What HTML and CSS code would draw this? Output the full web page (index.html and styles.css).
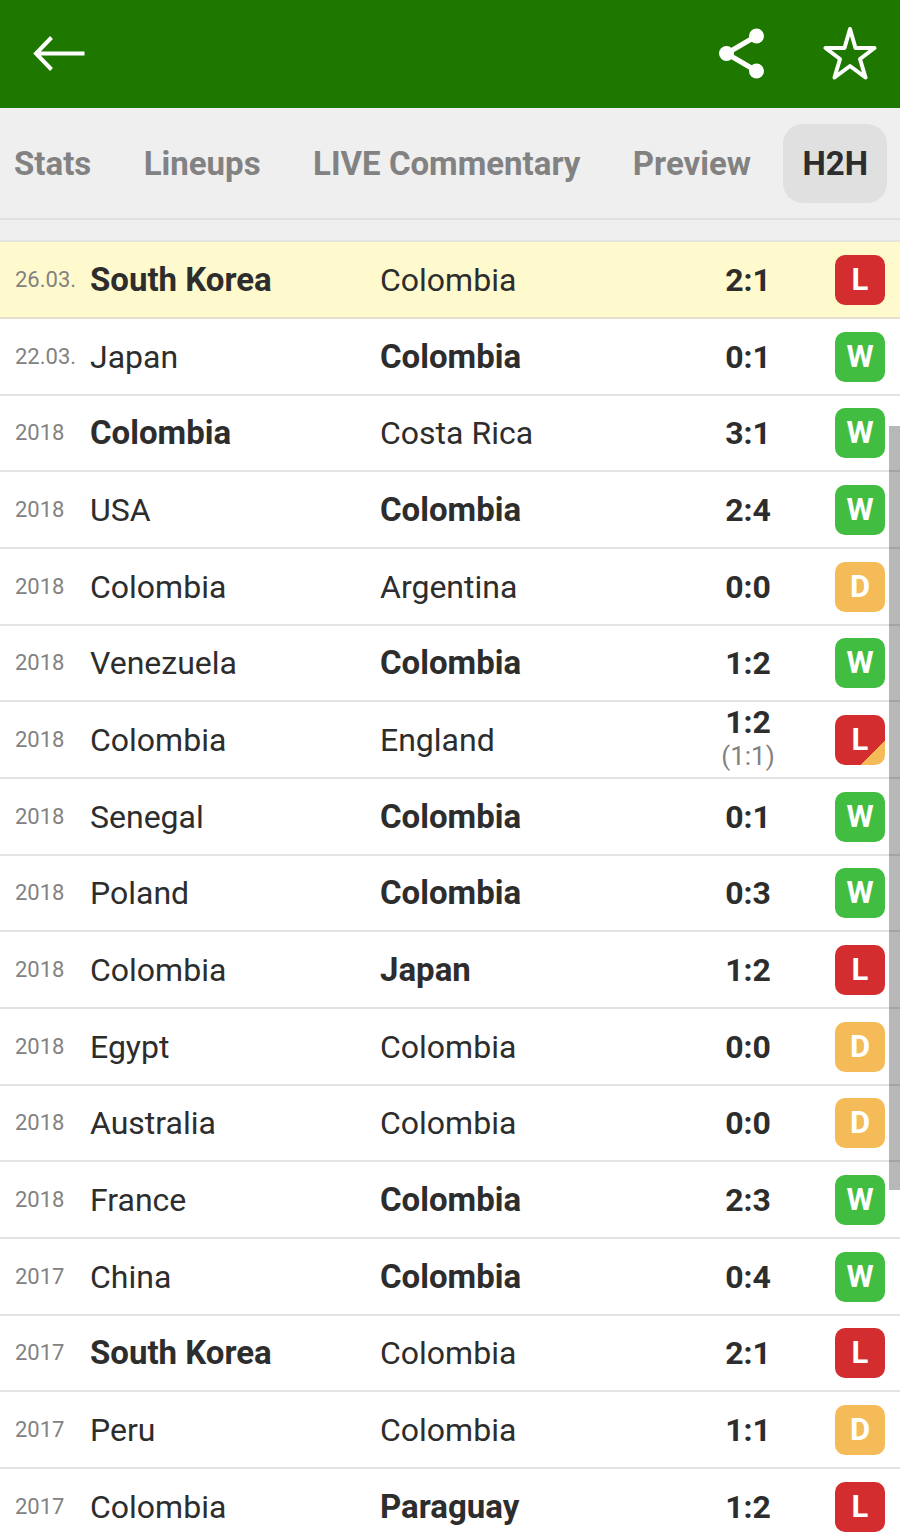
FILE: index.html
```html
<!DOCTYPE html>
<html lang="en">
<head>
<meta charset="UTF-8">
<meta name="viewport" content="width=device-width, initial-scale=1.0">
<title>Colombia - H2H</title>
<link rel="stylesheet" href="styles.css">
</head>
<body>
<header class="topbar">
    <button class="icon-btn" aria-label="Back">
        <svg width="54" height="54" viewBox="0 0 54 54" fill="none" stroke="#fff" stroke-width="4"><path d="M52.500 26.500H4M19.500 10.500L4 26.500L19.500 42.500"/></svg>
    </button>
    <div class="actions">
        <button class="icon-btn" aria-label="Share">
            <svg width="54" height="54" viewBox="0 0 54 54" fill="#fff"><path d="M41.5 9L11.5 26.5L41.5 44" fill="none" stroke="#fff" stroke-width="5"/><circle cx="41.5" cy="9" r="7.5"/><circle cx="11.5" cy="26.5" r="7.5"/><circle cx="41.5" cy="44" r="7.5"/></svg>
        </button>
        <button class="icon-btn" aria-label="Add to favourites">
            <svg width="54" height="54" viewBox="0 0 54 54" fill="none" stroke="#fff" stroke-width="4" stroke-linejoin="round"><path d="M27 2L32.5 21H51.5L37 32L42.5 50.5L27 39L11.500 50.5L17 32L2.5 21H21.5Z"/></svg>
        </button>
    </div>
</header>
<nav class="tabs">
    <a class="tab" href="#">Stats</a>
    <a class="tab" href="#">Lineups</a>
    <a class="tab" href="#">LIVE Commentary</a>
    <a class="tab" href="#">Preview</a>
    <a class="tab active" href="#">H2H</a>
</nav>
<main class="content">
    <table class="matches">
        <colgroup>
            <col class="col-date">
            <col class="col-home">
            <col>
            <col class="col-score">
            <col class="col-result">
        </colgroup>
        <tbody>
            <tr class="current"><td class="date">26.03.</td><td><b>South Korea</b></td><td>Colombia</td><td class="score">2:1</td><td><span class="badge loss">L</span></td></tr>
            <tr><td class="date">22.03.</td><td>Japan</td><td><b>Colombia</b></td><td class="score">0:1</td><td><span class="badge win">W</span></td></tr>
            <tr><td class="date">2018</td><td><b>Colombia</b></td><td>Costa Rica</td><td class="score">3:1</td><td><span class="badge win">W</span></td></tr>
            <tr><td class="date">2018</td><td>USA</td><td><b>Colombia</b></td><td class="score">2:4</td><td><span class="badge win">W</span></td></tr>
            <tr><td class="date">2018</td><td>Colombia</td><td>Argentina</td><td class="score">0:0</td><td><span class="badge draw">D</span></td></tr>
            <tr><td class="date">2018</td><td>Venezuela</td><td><b>Colombia</b></td><td class="score">1:2</td><td><span class="badge win">W</span></td></tr>
            <tr><td class="date">2018</td><td>Colombia</td><td>England</td><td class="score">1:2<small>(1:1)</small></td><td><span class="badge loss penalties">L</span></td></tr>
            <tr><td class="date">2018</td><td>Senegal</td><td><b>Colombia</b></td><td class="score">0:1</td><td><span class="badge win">W</span></td></tr>
            <tr><td class="date">2018</td><td>Poland</td><td><b>Colombia</b></td><td class="score">0:3</td><td><span class="badge win">W</span></td></tr>
            <tr><td class="date">2018</td><td>Colombia</td><td><b>Japan</b></td><td class="score">1:2</td><td><span class="badge loss">L</span></td></tr>
            <tr><td class="date">2018</td><td>Egypt</td><td>Colombia</td><td class="score">0:0</td><td><span class="badge draw">D</span></td></tr>
            <tr><td class="date">2018</td><td>Australia</td><td>Colombia</td><td class="score">0:0</td><td><span class="badge draw">D</span></td></tr>
            <tr><td class="date">2018</td><td>France</td><td><b>Colombia</b></td><td class="score">2:3</td><td><span class="badge win">W</span></td></tr>
            <tr><td class="date">2017</td><td>China</td><td><b>Colombia</b></td><td class="score">0:4</td><td><span class="badge win">W</span></td></tr>
            <tr><td class="date">2017</td><td><b>South Korea</b></td><td>Colombia</td><td class="score">2:1</td><td><span class="badge loss">L</span></td></tr>
            <tr><td class="date">2017</td><td>Peru</td><td>Colombia</td><td class="score">1:1</td><td><span class="badge draw">D</span></td></tr>
            <tr><td class="date">2017</td><td>Colombia</td><td><b>Paraguay</b></td><td class="score">1:2</td><td><span class="badge loss">L</span></td></tr>
        </tbody>
    </table>
    <div class="scroll-thumb"></div>
</main>
</body>
</html>
```

FILE: styles.css
```css
* {
    box-sizing: border-box;
}
body {
    display: flex;
    flex-direction: column;
    height: 100vh;
    margin: 0;
    overflow: hidden;
    font-family: Roboto, Arial, sans-serif;
    font-size: 32px;
    color: #2d2d2d;
    background: #fff;
}

/* Top bar */
.topbar {
    display: flex;
    flex: none;
    justify-content: space-between;
    align-items: center;
    height: 108px;
    padding: 0 23px 0 32px;
    background: #1e7800;
}
.actions {
    display: flex;
    gap: 54px;
}
.icon-btn {
    display: block;
    padding: 0;
    border: none;
    background: none;
    cursor: pointer;
}
.icon-btn svg {
    display: block;
}

/* Tabs */
.tabs {
    display: flex;
    flex: none;
    justify-content: space-between;
    align-items: center;
    height: 112px;
    padding: 0 13px 0 14px;
    border-bottom: 2px solid #e0e0e0;
    background: #efefef;
}
.tab {
    font-size: 33px;
    font-weight: bold;
    line-height: 79px;
    color: #828282;
    text-decoration: none;
    white-space: nowrap;
}
.tab.active {
    margin-left: -20px;
    padding: 0 19px;
    border-radius: 20px;
    color: #2d2d2d;
    background: #e0e0e0;
}

/* Match list */
.content {
    position: relative;
    flex: 1;
    min-height: 0;
    padding-top: 20px;
    overflow: hidden;
    background: #efefef;
}
.matches {
    width: 100%;
    table-layout: fixed;
    border-collapse: separate;
    border-spacing: 0;
    border-top: 2px solid #e3e3e0;
    background: #fff;
}
.col-date {
    width: 90px;
}
.col-home {
    width: 290px;
}
.col-score {
    width: 120px;
}
.col-result {
    width: 92px;
}
.matches td {
    height: 77px;
    padding: 0;
    border-bottom: 2px solid #e3e3e3;
    line-height: 32px;
    white-space: nowrap;
}
.matches tr:nth-child(3n) td {
    height: 76px;
}
.matches .current td {
    border-color: #e3e0cc;
    background: #fefacd;
}
.matches b {
    font-size: 33px;
}
.matches .date {
    padding-left: 15px;
    font-size: 22px;
    color: #828282;
}
.matches .score {
    font-weight: bold;
    text-align: center;
}
.score small {
    display: block;
    font-size: 26px;
    font-weight: normal;
    line-height: 36px;
    color: #828282;
}
.badge {
    display: block;
    width: 50px;
    height: 50px;
    margin: 0 15px 0 auto;
    border-radius: 10px;
    font-size: 31px;
    font-weight: bold;
    line-height: 50px;
    text-align: center;
    color: #fff;
}
.win {
    background: #41be41;
}
.draw {
    background: #f6bb59;
}
.loss {
    background: #d32d2f;
}
.penalties {
    background: linear-gradient(135deg, #d32d2f 76%, #f6bb59 76%);
}
.scroll-thumb {
    position: absolute;
    top: 206px;
    right: 0;
    width: 11px;
    height: 764px;
    background: rgba(0, 0, 0, 0.28);
}
```
